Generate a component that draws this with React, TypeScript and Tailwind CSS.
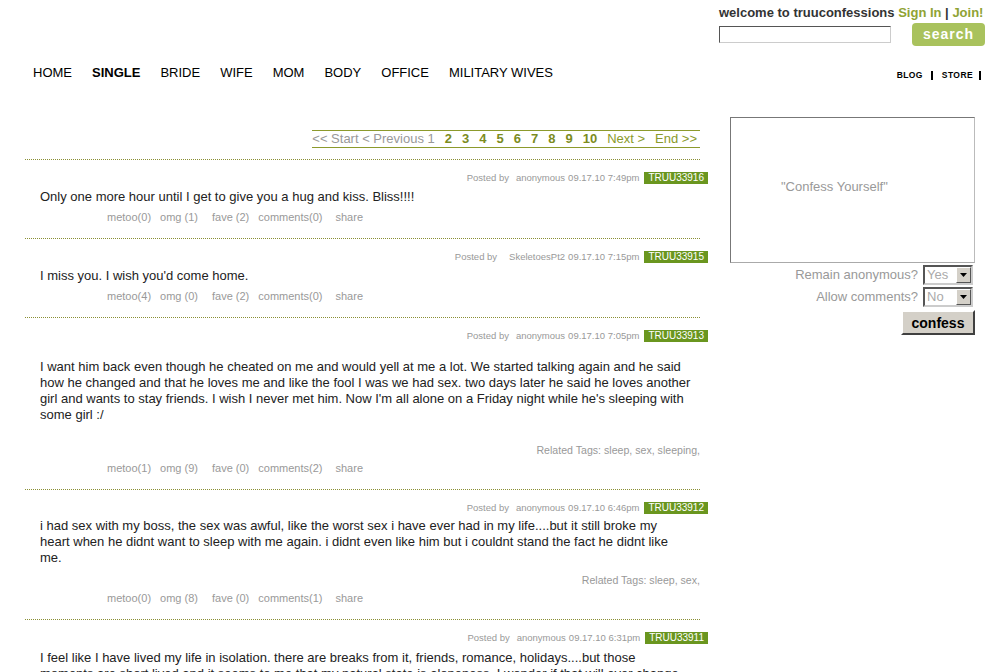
import React from "react";

type Post = {
  author: string;
  date: string;
  id: string;
  lines: string[];
  tags?: string;
  counts: [number, number, number, number];
  authorGap: string;
  textGap: string;
  tagsGap?: string;
};

const posts: Post[] = [
  {
    author: "anonymous",
    date: "09.17.10 7:49pm",
    id: "TRUU33916",
    lines: ["Only one more hour until I get to give you a hug and kiss. Bliss!!!!"],
    counts: [0, 1, 2, 0],
    authorGap: "ml-[7px]",
    textGap: "mt-[5px]",
  },
  {
    author: "SkeletoesPt2",
    date: "09.17.10 7:15pm",
    id: "TRUU33915",
    lines: ["I miss you. I wish you'd come home."],
    counts: [4, 0, 2, 0],
    authorGap: "ml-[12px]",
    textGap: "mt-[5px]",
  },
  {
    author: "anonymous",
    date: "09.17.10 7:05pm",
    id: "TRUU33913",
    lines: [
      "I want him back even though he cheated on me and would yell at me a lot. We started talking again and he said",
      "how he changed and that he loves me and like the fool I was we had sex. two days later he said he loves another",
      "girl and wants to stay friends. I wish I never met him. Now I'm all alone on a Friday night while he's sleeping with",
      "some girl :/",
    ],
    tags: "sleep, sex, sleeping,",
    counts: [1, 9, 0, 2],
    authorGap: "ml-[7px]",
    textGap: "mt-[17px]",
    tagsGap: "mt-[21px]",
  },
  {
    author: "anonymous",
    date: "09.17.10 6:46pm",
    id: "TRUU33912",
    lines: [
      "i had sex with my boss, the sex was awful, like the worst sex i have ever had in my life....but it still broke my",
      "heart when he didnt want to sleep with me again. i didnt even like him but i couldnt stand the fact he didnt like",
      "me.",
    ],
    tags: "sleep, sex,",
    counts: [0, 8, 0, 1],
    authorGap: "ml-[7px]",
    textGap: "mt-[4px]",
    tagsGap: "mt-[8px]",
  },
  {
    author: "anonymous",
    date: "09.17.10 6:31pm",
    id: "TRUU33911",
    lines: [
      "I feel like I have lived my life in isolation. there are breaks from it, friends, romance, holidays....but those",
      "moments are short lived and it seems to me that my natural state is aloneness. I wonder if that will ever change.",
      "Will I always be alone?",
    ],
    counts: [0, 3, 1, 0],
    authorGap: "ml-[7px]",
    textGap: "mt-[6px]",
  },
];

const navItems = ["HOME", "SINGLE", "BRIDE", "WIFE", "MOM", "BODY", "OFFICE", "MILITARY WIVES"];

function PostRow({ p }: { p: Post }) {
  return (
    <div className="border-b border-dotted border-[#8a8f34] pt-[12px] pb-[14px]">
      <div className="flex h-[12px] items-center justify-end -mr-[8px] text-[9.5px] leading-[12px] text-[#999] whitespace-nowrap">
        <span>Posted by</span>
        <span className={p.authorGap}>{p.author}</span>
        <span className="ml-[3px]">{p.date}</span>
        <span className="ml-[5px] bg-[#6a961f] px-[4px] text-[10px] leading-[12px] text-white">{p.id}</span>
      </div>
      <div className={`${p.textGap} pl-[15px] text-[13px] leading-[16px] text-[#222]`}>
        {p.lines.map((l, i) => (
          <div key={i} className="whitespace-nowrap">
            {l}
          </div>
        ))}
      </div>
      {p.tags && (
        <div className={`${p.tagsGap} text-right text-[10.6px] leading-[12px] text-[#999]`}>
          Related Tags: {p.tags}
        </div>
      )}
      <div className="mt-[5px] flex pl-[82px] text-[11px] leading-[14px] text-[#999]">
        <span>metoo({p.counts[0]})</span>
        <span className="ml-[9px]">omg ({p.counts[1]})</span>
        <span className="ml-[14px]">fave ({p.counts[2]})</span>
        <span className="ml-[9px]">comments({p.counts[3]})</span>
        <span className="ml-[13px]">share</span>
      </div>
    </div>
  );
}

function FakeSelect({ value }: { value: string }) {
  return (
    <div className="flex h-[20px] w-[50px] items-center border-2 border-t-[#555] border-l-[#555] border-b-[#ccc] border-r-[#ccc] bg-white">
      <span className="flex-1 pl-[2px] text-[13px] leading-[16px] text-[#aaa]">{value}</span>
      <span className="flex h-[16px] w-[15px] items-center justify-center border border-t-white border-l-white border-b-[#555] border-r-[#555] bg-[#d4d0c8]">
        <svg width="7" height="4" viewBox="0 0 7 4">
          <polygon points="0,0 7,0 3.5,4" fill="#000" />
        </svg>
      </span>
    </div>
  );
}

export default function App() {
  return (
    <div className="h-[672px] w-[1005px] overflow-hidden bg-white font-['Liberation_Sans',Arial,sans-serif]">
      <header className="flex justify-end pr-[20px] pt-[5px]">
        <div className="w-[266px]">
          <div className="whitespace-nowrap text-[13px] font-bold leading-[16px] text-[#333]">
            welcome to truuconfessions <span className="text-[#8fa334]">Sign In</span> |{" "}
            <span className="text-[#8fa334]">Join!</span>
          </div>
          <div className="mt-[2px] flex items-center justify-between">
            <input
              className="h-[17px] w-[172px] border border-t-[#555] border-l-[#555] border-b-[#ccc] border-r-[#ccc] bg-white outline-none"
              readOnly
            />
            <button className="h-[23px] w-[73px] rounded-[4px] bg-[#a9c25d] text-[14px] font-bold tracking-[1px] text-white">
              search
            </button>
          </div>
        </div>
      </header>

      <nav className="mt-[19px] flex items-center pl-[33px] pr-[24px]">
        <ul className="flex gap-[20px] text-[13px] leading-[16px] text-black">
          {navItems.map((n) => (
            <li key={n} className={n === "SINGLE" ? "font-bold" : ""}>
              {n}
            </li>
          ))}
        </ul>
        <div className="ml-auto mt-[4px] flex items-center text-[8.5px] font-bold leading-[10px] tracking-[0.4px] text-black">
          <span>BLOG</span>
          <span className="ml-[8px] h-[9px] w-[2px] bg-black" />
          <span className="ml-[9px]">STORE</span>
          <span className="ml-[6px] h-[9px] w-[2px] bg-black" />
        </div>
      </nav>

      <main className="mt-[36px] flex">
        <section className="ml-[25px] w-[675px] pt-[13px]">
          <div className="flex justify-end">
            <div className="flex h-[18px] items-center gap-[10px] border-y border-[#8c9a2c] pr-[3px] text-[13px] leading-[16px] whitespace-nowrap">
              <span className="text-[#999]">&lt;&lt; Start &lt; Previous 1</span>
              {[2, 3, 4, 5, 6, 7, 8, 9, 10].map((n) => (
                <span key={n} className="font-bold text-[#7c8c1e]">
                  {n}
                </span>
              ))}
              <span className="text-[#8a9a2a]">Next &gt;</span>
              <span className="text-[#8a9a2a]">End &gt;&gt;</span>
            </div>
          </div>
          <div className="mt-[11px] border-t border-dotted border-[#8a8f34]" />
          {posts.map((p) => (
            <PostRow key={p.id} p={p} />
          ))}
        </section>

        <aside className="ml-[30px] w-[245px]">
          <div className="h-[146px] border border-t-[#777] border-l-[#777] border-b-[#aaa] border-r-[#bbb] pl-[50px] pt-[61px] text-[13px] leading-[16px] text-[#999]">
            "Confess Yourself"
          </div>
          <div className="mt-[2px] flex items-center justify-end gap-[5px] pr-[2px]">
            <span className="text-[13px] leading-[16px] text-[#999]">Remain anonymous?</span>
            <FakeSelect value="Yes" />
          </div>
          <div className="mt-[2px] flex items-center justify-end gap-[5px] pr-[2px]">
            <span className="text-[13px] leading-[16px] text-[#999]">Allow comments?</span>
            <FakeSelect value="No" />
          </div>
          <div className="mt-[3px] flex justify-end">
            <button className="h-[25px] w-[74px] border-2 border-t-white border-l-white border-b-[#404040] border-r-[#404040] bg-[#d4d0c8] text-[14px] font-bold leading-[16px] text-black">
              confess
            </button>
          </div>
        </aside>
      </main>
    </div>
  );
}
